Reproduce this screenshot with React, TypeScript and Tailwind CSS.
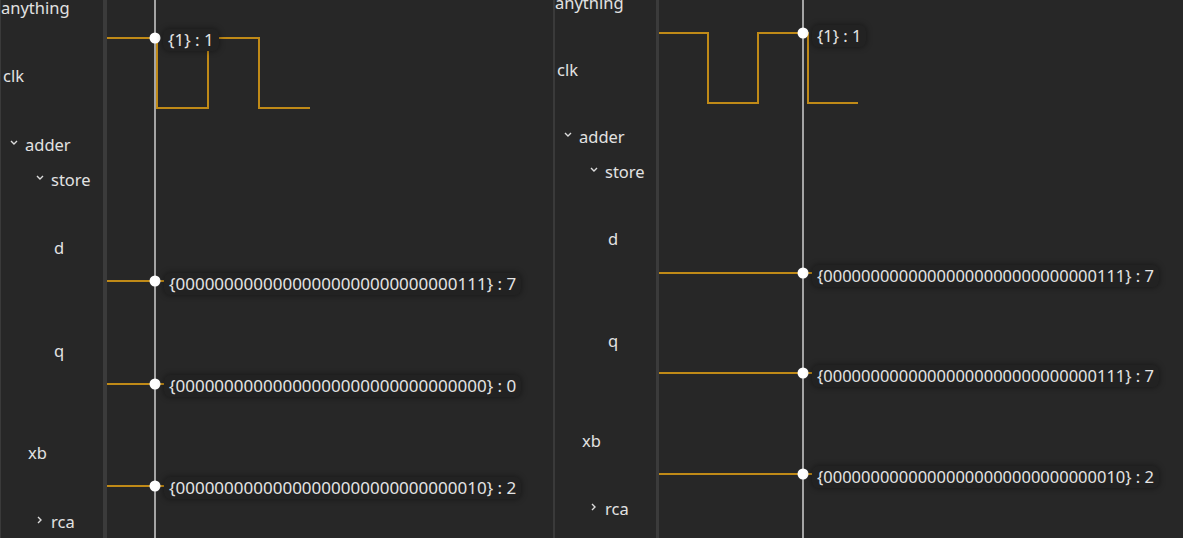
import React from "react";

type Row = { label: string; cls: string; chevron?: "down" | "right"; chevCls?: string };

const leftRows: Row[] = [
  { label: "anything", cls: "h-[68px] pl-0" },
  { label: "clk", cls: "h-[69px] pl-[2px]" },
  { label: "adder", cls: "h-[35px] pl-[9px]", chevron: "down", chevCls: "mr-[7px] mb-[6px]" },
  { label: "store", cls: "h-[68px] pl-[35px]", chevron: "down", chevCls: "mr-[7px] mb-[5px]" },
  { label: "d", cls: "h-[103px] pl-[53px]" },
  { label: "q", cls: "h-[102px] pl-[53px]" },
  { label: "xb", cls: "h-[69px] pl-[27px]" },
  { label: "rca", cls: "h-[34px] pl-[36px]", chevron: "right", chevCls: "mr-[9px] mb-[4px]" },
];

const rightRows: Row[] = [
  { label: "anything", cls: "h-[67px] pl-0" },
  { label: "clk", cls: "h-[67px] pl-[2px]" },
  { label: "adder", cls: "h-[35px] pl-[9px]", chevron: "down", chevCls: "mr-[7px] mb-[5px]" },
  { label: "store", cls: "h-[67px] pl-[35px]", chevron: "down", chevCls: "mr-[7px] mb-[5px]" },
  { label: "d", cls: "h-[102px] pl-[53px]" },
  { label: "q", cls: "h-[100px] pl-[53px]" },
  { label: "xb", cls: "h-[68px] pl-[27px]" },
  { label: "rca", cls: "h-[34px] pl-[36px]", chevron: "right", chevCls: "mr-[9px] mb-[4px]" },
];

const WAVE = "#c08a17";

const Chevron = ({ dir, cls }: { dir: "down" | "right"; cls?: string }) =>
  dir === "down" ? (
    <svg width="8" height="5" viewBox="0 0 8 5" className={`shrink-0 ${cls}`}>
      <path d="M1 1l3 3 3-3" stroke="#dcdcdc" strokeWidth="1.4" fill="none" />
    </svg>
  ) : (
    <svg width="5" height="8" viewBox="0 0 5 8" className={`shrink-0 ${cls}`}>
      <path d="M1 1l3 3-3 3" stroke="#dcdcdc" strokeWidth="1.4" fill="none" />
    </svg>
  );

const Sidebar = ({ rows, cls }: { rows: Row[]; cls: string }) => (
  <div className={`overflow-hidden shrink-0 ${cls}`}>
    {rows.map((r) => (
      <div key={r.label} className={`flex items-start ${r.cls}`}>
        <div className="flex h-[34px] items-center whitespace-nowrap text-[16.5px] leading-[34px] text-[#e2e2e2]">
          {r.chevron && <Chevron dir={r.chevron} cls={r.chevCls} />}
          <span>{r.label}</span>
        </div>
      </div>
    ))}
  </div>
);

const ValueTag = ({ cls, text }: { cls: string; text: string }) => (
  <div
    className={`absolute h-[22px] whitespace-nowrap rounded-md bg-[#222222] px-[5px] leading-[22px] text-[#e4e4e4] shadow-[0_0_6px_rgba(0,0,0,0.45)] ${cls}`}
  >
    {text}
  </div>
);

const Dot = ({ x, y }: { x: number; y: number }) => <circle cx={x} cy={y} r={5.5} fill="#ffffff" />;

const LeftWaves = () => (
  <div className="relative flex-1 overflow-hidden">
    <svg className="absolute inset-0" width="446" height="538">
      <path d="M0 38H50V108H101V38H152V108H203" stroke={WAVE} strokeWidth="2" fill="none" />
      <path d="M0 281H70M0 384H70M0 486H70" stroke={WAVE} strokeWidth="2" fill="none" />
      <line x1="48" y1="0" x2="48" y2="538" stroke="#a4a4a4" strokeWidth="2" />
      <Dot x={48} y={38} />
      <Dot x={48} y={281} />
      <Dot x={48} y={384} />
      <Dot x={48} y={486} />
    </svg>
    <ValueTag cls="left-[56px] top-[29px] text-[17px]" text="{1} : 1" />
    <ValueTag cls="left-[57px] top-[273px] text-[17px]" text="{00000000000000000000000000000111} : 7" />
    <ValueTag cls="left-[57px] top-[375px] text-[17px]" text="{00000000000000000000000000000000} : 0" />
    <ValueTag cls="left-[57px] top-[477px] text-[17px]" text="{00000000000000000000000000000010} : 2" />
  </div>
);

const RightWaves = () => (
  <div className="relative flex-1 overflow-hidden">
    <svg className="absolute inset-0" width="524" height="538">
      <path d="M0 33H49V103H99V33H149V103H199" stroke={WAVE} strokeWidth="2" fill="none" />
      <path d="M0 273H165M0 373H165M0 474H165" stroke={WAVE} strokeWidth="2" fill="none" />
      <line x1="144" y1="0" x2="144" y2="538" stroke="#a4a4a4" strokeWidth="2" />
      <Dot x={144} y={33} />
      <Dot x={144} y={273} />
      <Dot x={144} y={373} />
      <Dot x={144} y={474} />
    </svg>
    <ValueTag cls="left-[153px] top-[25px] text-[16.5px]" text="{1} : 1" />
    <ValueTag cls="left-[153px] top-[265px] text-[16.5px]" text="{00000000000000000000000000000111} : 7" />
    <ValueTag cls="left-[153px] top-[365px] text-[16.5px]" text="{00000000000000000000000000000111} : 7" />
    <ValueTag cls="left-[153px] top-[466px] text-[16.5px]" text="{00000000000000000000000000000010} : 2" />
  </div>
);

export default function App() {
  return (
    <div className="flex h-[538px] w-[1183px] overflow-hidden bg-[#272727] font-['Noto_Sans',sans-serif]">
      <div className="flex h-full w-[553px] shrink-0 border-l border-[#3a3a3a]">
        <Sidebar rows={leftRows} cls="w-[102px] -mt-[9px]" />
        <div className="h-full w-[4px] shrink-0 bg-[#3b3b3b]" />
        <LeftWaves />
      </div>
      <div className="flex h-full flex-1 border-l-2 border-[#3a3a3a]">
        <Sidebar rows={rightRows} cls="w-[101px] -mt-[14px]" />
        <div className="h-full w-[3px] shrink-0 bg-[#3b3b3b]" />
        <RightWaves />
      </div>
    </div>
  );
}
